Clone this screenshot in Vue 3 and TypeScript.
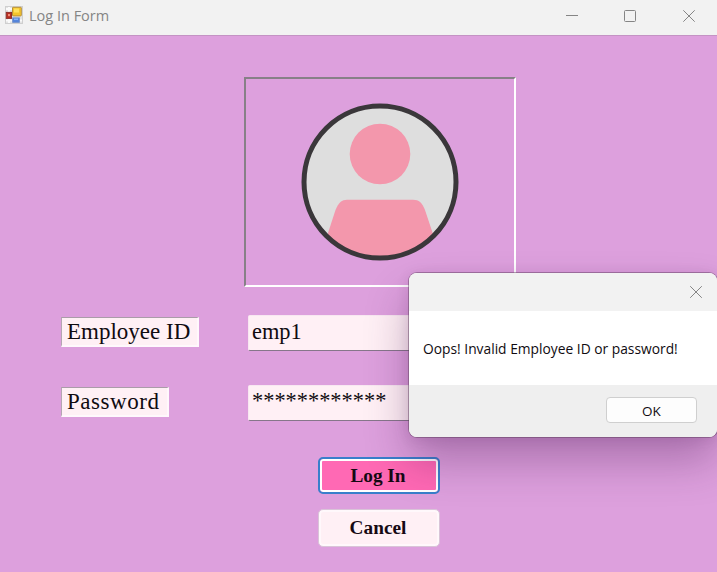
<script setup lang="ts">
import { ref } from 'vue'

const employeeId = ref('emp1')
const password = ref('************')
const message = ref('Oops! Invalid Employee ID or password!')
</script>

<template>
  <main class="window">
    <header class="titlebar">
      <svg class="app-icon" width="18" height="18" viewBox="0 0 18 18">
        <rect x="0.5" y="0.5" width="17" height="17" fill="#e3e3e3" stroke="#cfcfcf" />
        <path d="M1 3H7M1 14.5H17M4 1V17" stroke="#fafafa" stroke-width="2" />
        <rect x="7.5" y="1.3" width="8.8" height="8.6" rx="0.6" fill="#f4c52c" stroke="#b8903a" />
        <rect x="9" y="2.5" width="5" height="4" fill="#ffe15c" />
        <rect x="1.3" y="6.4" width="5.2" height="6" fill="#b92d20" stroke="#8f302b" />
        <rect x="3" y="8" width="2" height="2.2" fill="#ef8a78" />
        <rect x="7.7" y="11.9" width="6.6" height="4.4" fill="#4f82dd" stroke="#6d8dc9" />
        <rect x="9" y="12.5" width="4" height="1.6" fill="#88b4f6" />
      </svg>
      <h1 class="title">Log In Form</h1>
      <nav class="controls">
        <svg width="12" height="12" viewBox="0 0 12 12"><path d="M0 5.5H12" /></svg>
        <svg width="12" height="12" viewBox="0 0 12 12"><rect x="0.5" y="0.5" width="11" height="11" rx="1" /></svg>
        <svg width="12" height="12" viewBox="0 0 12 12"><path d="M0.3 0.3L11.7 11.7M11.7 0.3L0.3 11.7" /></svg>
      </nav>
    </header>

    <form class="form" @submit.prevent>
      <div class="picture">
        <svg width="158" height="158" viewBox="0 0 158 158">
          <defs><clipPath id="disc"><circle cx="79" cy="79" r="75" /></clipPath></defs>
          <circle cx="79" cy="79" r="76" fill="#dedede" />
          <circle cx="79" cy="51" r="30.3" fill="#f397ac" />
          <path clip-path="url(#disc)" fill="#f397ac"
            d="M46 96.7H112C118 96.7 121 99.5 124 107L133 134V158H23L27 130L34.5 107C37.5 99.5 41 96.7 46 96.7Z" />
          <circle cx="79" cy="79" r="76" fill="none" stroke="#3a373a" stroke-width="5" />
        </svg>
      </div>
      <div class="fields">
        <div class="cell"><label class="label id-label" for="employee">Employee ID</label></div>
        <input id="employee" v-model="employeeId" class="input" type="text">
        <div class="cell"><label class="label pw-label" for="password">Password</label></div>
        <input id="password" v-model="password" class="input masked" type="text">
      </div>
      <div class="actions">
        <button class="action primary" type="submit">Log In</button>
        <button class="action cancel" type="button">Cancel</button>
      </div>
    </form>

    <section class="dialog" role="alertdialog">
      <div class="dialog-head">
        <svg width="12" height="12" viewBox="0 0 12 12"><path d="M0.2 0.2L11.8 11.8M11.8 0.2L0.2 11.8" /></svg>
      </div>
      <p class="dialog-body"><span>{{ message }}</span></p>
      <div class="dialog-foot"><button class="ok" type="button">OK</button></div>
    </section>
  </main>
</template>

<style>
body {
  margin: 0;
  overflow: hidden;
}
</style>

<style scoped>
* {
  box-sizing: border-box;
}
.window {
  position: relative;
  width: 717px;
  height: 572px;
  overflow: hidden;
  background: #dda0dd;
  font-family: "Liberation Serif", serif;
  color: #100b10;
}
.titlebar {
  display: flex;
  align-items: center;
  height: 36px;
  padding: 0 22px 4px 5px;
  background: #f2f2f2;
  border-bottom: 1px solid #c493c4;
}
.app-icon {
  margin-top: -1px;
}
.title {
  margin: 0 0 0 6px;
  font: 400 14.5px/20px "Open Sans", sans-serif;
  color: #858585;
}
.controls {
  display: flex;
  gap: 47px;
  margin-left: auto;
}
.controls svg:first-child {
  margin-right: -1px;
}
.controls svg,
.dialog-head svg {
  fill: none;
  stroke: #858585;
  stroke-width: 1;
}
.form {
  padding-top: 41px;
}
.picture {
  display: flex;
  align-items: center;
  justify-content: center;
  width: 272px;
  height: 210px;
  margin-left: 244px;
  border: 2px solid;
  border-color: #878087 #fff #fff #878087;
}
.fields {
  display: grid;
  grid-template-columns: 187px 264px;
  row-gap: 34px;
  margin: 28px 0 0 61px;
}
.cell {
  padding-top: 2px;
}
.label {
  display: block;
  height: 30px;
  padding-left: 5px;
  border: 2px solid;
  border-width: 1px 2px 2px 1px;
  border-color: #aa9ca8 #fff8fc #fff8fc #b5a5b3;
  background: #fff0f5;
  font-size: 23px;
  line-height: 27px;
  white-space: nowrap;
}
.id-label {
  width: 138px;
}
.pw-label {
  width: 108px;
  letter-spacing: 0.55px;
}
.input {
  width: 264px;
  height: 36px;
  padding: 0 3px 3px;
  border: 1px solid #f8e7f1;
  border-bottom-color: #86768a;
  border-radius: 2px;
  outline: none;
  background: #fff0f5;
  color: #100b10;
  font: 22.4px/30px "Liberation Serif", serif;
}
.masked {
  padding-bottom: 5px;
}
.actions {
  display: flex;
  flex-direction: column;
  gap: 15px;
  width: 122px;
  margin: 36px 0 0 318px;
}
.action {
  height: 37px;
  padding: 0 2px 0 0;
  font: bold 19.3px/28px "Liberation Serif", serif;
  color: #160913;
}
.primary {
  border: 2px solid #387fcb;
  border-radius: 5px;
  background: #ff69b4;
  box-shadow: inset 0 0 0 2px #fff;
}
.cancel {
  height: 38px;
  border: 1px solid #d9c4d8;
  border-radius: 5px;
  background: #fff0f5;
  box-shadow: inset 0 0 0 2px #fff8fb;
}
.dialog {
  position: absolute;
  top: 273px;
  left: 409px;
  width: 308px;
  height: 164px;
  border-radius: 8px;
  background: #fff;
  box-shadow: 0 0 0 1px rgba(90, 60, 90, 0.45), 0 24px 44px rgba(70, 20, 80, 0.33), 0 2px 14px rgba(70, 20, 80, 0.12);
  font-family: "Open Sans", sans-serif;
}
.dialog-head {
  display: flex;
  align-items: center;
  justify-content: flex-end;
  height: 38px;
  padding-right: 15px;
  border-radius: 8px 8px 0 0;
  background: #f2f2f2;
}
.dialog-body {
  display: flex;
  align-items: center;
  height: 74px;
  margin: 0;
  padding: 0 0 0 14px;
  font-size: 13.8px;
  white-space: nowrap;
}
.dialog-foot {
  display: flex;
  justify-content: flex-end;
  height: 52px;
  padding: 12px 20px 0 0;
  border-radius: 0 0 8px 8px;
  background: #efefef;
}
.ok {
  width: 91px;
  height: 26px;
  padding: 1px 0 0;
  border: 1px solid #cfcfcf;
  border-radius: 4px;
  background: #fdfdfd;
  color: #100b10;
  font: 13.5px/24px "Open Sans", sans-serif;
}
</style>
